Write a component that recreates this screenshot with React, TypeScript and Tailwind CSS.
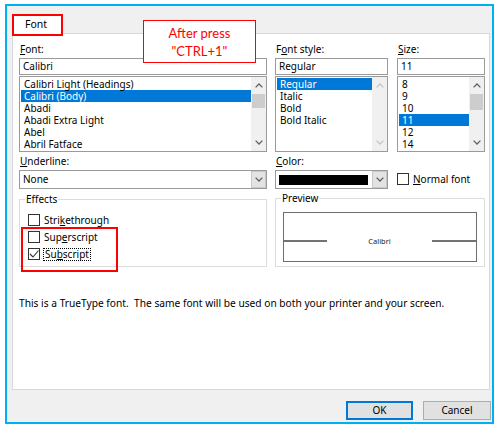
import React from "react";

function Chevron({ dir, color }: { dir: "up" | "down"; color: string }) {
  return (
    <svg width="8" height="5" viewBox="0 0 8 5">
      <path
        d={dir === "up" ? "M0.6 4.4 L4 1 L7.4 4.4" : "M0.6 0.6 L4 4 L7.4 0.6"}
        fill="none"
        stroke={color}
        strokeWidth="1.3"
      />
    </svg>
  );
}

function ScrollBar({ thumb, disabled }: { thumb?: string; disabled?: boolean }) {
  const c = disabled ? "#c4c4c4" : "#606060";
  return (
    <div className="w-[15px] h-full bg-[#f0f0f0] flex flex-col">
      <div className="h-[17px] flex items-center justify-center">
        <Chevron dir="up" color={c} />
      </div>
      {thumb ? <div className={thumb} /> : null}
      <div className="flex-1" />
      <div className="h-[17px] flex items-center justify-center">
        <Chevron dir="down" color={c} />
      </div>
    </div>
  );
}

function ListBox({
  items,
  selected,
  thumb,
  disabled,
}: {
  items: string[];
  selected: number;
  thumb?: string;
  disabled?: boolean;
}) {
  return (
    <div className="mt-[1px] h-[76px] border border-[#9a9a9a] bg-white flex">
      <div className="flex-1 pt-[1px] pl-[1px]">
        {items.map((t, i) => (
          <div
            key={t}
            className={
              "h-[12px] leading-[12px] pl-[3px] whitespace-nowrap " +
              (i === selected ? "bg-[#0078d7] text-white" : "text-black")
            }
          >
            {t}
          </div>
        ))}
      </div>
      <ScrollBar thumb={thumb} disabled={disabled} />
    </div>
  );
}

function TextBox({ value }: { value: string }) {
  return (
    <div className="mt-[3px] h-[17px] border border-[#9a9a9a] bg-white pl-[3px] leading-[15px]">
      {value}
    </div>
  );
}

function Label({ children }: { children: React.ReactNode }) {
  return <div className="h-[12px] leading-[12px] pl-[1px] whitespace-nowrap">{children}</div>;
}

function DropButton() {
  return (
    <div className="w-[15px] h-full bg-[#e3e3e3] border border-[#c8c8c8] flex items-center justify-center">
      <Chevron dir="down" color="#606060" />
    </div>
  );
}

function CheckBox({ checked }: { checked?: boolean }) {
  return (
    <div className="w-[12px] h-[12px] border border-[#333333] bg-white flex items-center justify-center shrink-0">
      {checked ? (
        <svg width="10" height="10" viewBox="0 0 10 10">
          <path d="M1 5 L4 8 L9.5 1.5" fill="none" stroke="#333" strokeWidth="1.1" />
        </svg>
      ) : null}
    </div>
  );
}

export default function App() {
  return (
    <div className="w-[500px] h-[432px] bg-white pt-[4px] pl-[5px] font-['Noto_Sans',sans-serif] text-[10px] text-black">
      <div className="relative w-[489px] h-[420px] border-2 border-[#00b0f0] bg-[#f0f0f0] flex flex-col">
        {/* annotation */}
        <div className="absolute left-[136px] top-[14px] w-[113px] h-[43px] border border-[#ff0000] bg-white flex flex-col items-center justify-center font-['Lato',sans-serif] text-[13px] leading-[18px] text-[#ff0000]">
          <div>After press</div>
          <div>"CTRL+1"</div>
        </div>

        {/* tab row */}
        <div className="pt-[8px] pl-[5px]">
          <div className="relative z-10 -mb-[3px] w-[51px] h-[22px] bg-white border-2 border-[#ff0000] flex items-center pl-[11px] text-[10.5px]">
            Font
          </div>
        </div>

        {/* panel */}
        <div className="ml-[5px] w-[478px] h-[357px] bg-white border border-[#d9d9d9] pl-[6px] pt-[9px]">
          {/* row 1 */}
          <div className="flex">
            <div className="w-[248px]">
              <Label>
                <u>F</u>ont:
              </Label>
              <TextBox value="Calibri" />
              <ListBox
                items={[
                  "Calibri Light (Headings)",
                  "Calibri (Body)",
                  "Abadi",
                  "Abadi Extra Light",
                  "Abel",
                  "Abril Fatface",
                ]}
                selected={1}
                thumb="mx-[1px] h-[14px] bg-[#cdcdcd]"
              />
            </div>
            <div className="w-[113px] ml-[8px]">
              <Label>
                F<u>o</u>nt style:
              </Label>
              <TextBox value="Regular" />
              <ListBox items={["Regular", "Italic", "Bold", "Bold Italic"]} selected={0} disabled />
            </div>
            <div className="w-[88px] ml-[9px]">
              <Label>
                <u>S</u>ize:
              </Label>
              <TextBox value="11" />
              <ListBox
                items={["8", "9", "10", "11", "12", "14"]}
                selected={3}
                thumb="mx-[1px] h-[16px] bg-[#cdcdcd]"
              />
            </div>
          </div>

          {/* row 2 */}
          <div className="flex mt-[3px]">
            <div className="w-[248px]">
              <Label>
                <u>U</u>nderline:
              </Label>
              <div className="mt-[3px] h-[19px] border border-[#9a9a9a] bg-white flex">
                <div className="flex-1 pl-[3px] leading-[17px]">None</div>
                <DropButton />
              </div>
            </div>
            <div className="w-[113px] ml-[8px]">
              <Label>
                <u>C</u>olor:
              </Label>
              <div className="mt-[3px] h-[19px] border border-[#9a9a9a] bg-white flex">
                <div className="flex-1 flex items-center pl-[3px] pr-[4px]">
                  <div className="w-full h-[10px] bg-black" />
                </div>
                <DropButton />
              </div>
            </div>
            <div className="ml-[9px] flex items-end pb-[4px]">
              <div className="flex items-center gap-[4px]">
                <CheckBox />
                <span className="leading-[12px]">
                  <u>N</u>ormal font
                </span>
              </div>
            </div>
          </div>

          {/* row 3: groups */}
          <div className="flex mt-[10px]">
            <div className="relative w-[248px] h-[68px] border border-[#dcdcdc] pl-[8px] pt-[14px]">
              <span className="absolute -top-[7px] left-[5px] bg-white px-[1px] leading-[12px]">Effects</span>
              <div className="flex flex-col gap-[5px]">
                <div className="flex items-center gap-[4px] h-[12px]">
                  <CheckBox />
                  <span className="leading-[12px]">
                    Stri<u>k</u>ethrough
                  </span>
                </div>
                <div className="flex items-center gap-[4px] h-[12px]">
                  <CheckBox />
                  <span className="leading-[12px]">
                    Sup<u>e</u>rscript
                  </span>
                </div>
                <div className="flex items-center gap-[3px] h-[12px]">
                  <CheckBox checked />
                  <span className="leading-[11px] border border-dotted border-black px-[1px]">
                    Su<u>b</u>script
                  </span>
                </div>
              </div>
              {/* red highlight box (annotation) */}
              <div className="absolute left-[1px] top-[27px] w-[97px] h-[45px] border-2 border-[#ff0000]" />
            </div>
            <div className="relative w-[210px] ml-[8px] h-[69px] -mt-[1px] border border-[#dcdcdc] pl-[7px] pt-[13px]">
              <span className="absolute -top-[7px] left-[5px] bg-white px-[1px] leading-[12px]">Preview</span>
              <div className="w-[194px] h-[50px] border border-[#6e6e6e] flex items-center pt-[8px]">
                <div className="w-[43px] h-[2px] bg-[#737373]" />
                <div className="flex-1 text-center text-[7.5px] leading-[8px] text-[#222]">
                  Calibri
                </div>
                <div className="w-[44px] h-[2px] bg-[#737373]" />
              </div>
            </div>
          </div>

          {/* truetype note */}
          <div className="mt-[30px] leading-[12px] whitespace-nowrap text-[10.2px]">
            This is a TrueType font.&nbsp; The same font will be used on both your printer and your screen.
          </div>
        </div>

        {/* buttons */}
        <div className="flex justify-end gap-[10px] pr-[1px] mt-[11px]">
          <div className="w-[67px] h-[19px] bg-[#e1e1e1] border-2 border-[#0078d7] flex items-center justify-center">
            OK
          </div>
          <div className="w-[68px] h-[19px] bg-[#e1e1e1] border border-[#adadad] flex items-center justify-center">
            Cancel
          </div>
        </div>
      </div>
    </div>
  );
}
